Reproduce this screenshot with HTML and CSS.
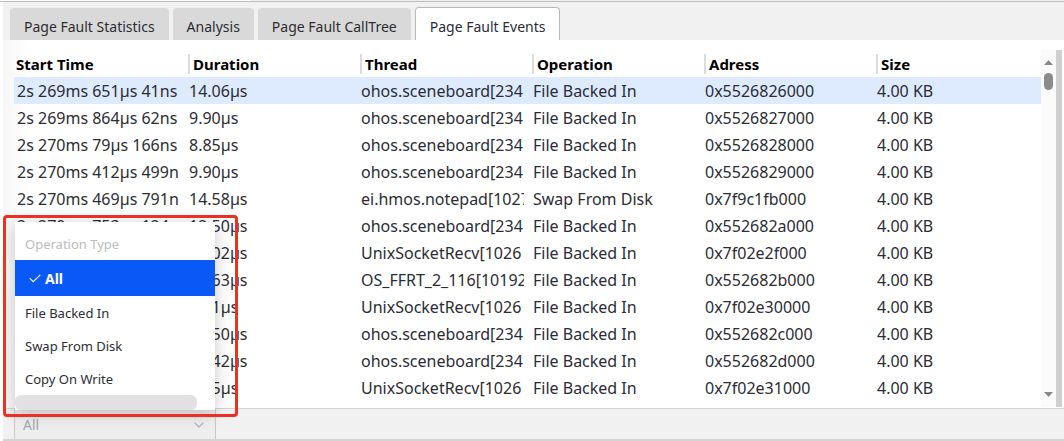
FILE: index.html
```html
<!DOCTYPE html>
<html lang="en">
<head>
<meta charset="utf-8">
<title>Page Fault Events</title>
<link rel="stylesheet" href="styles.css">
</head>
<body>
<main class="panel">
  <div class="ruler"></div>
  <div class="tabs" role="tablist">
    <button class="tab" role="tab" type="button">Page Fault Statistics</button>
    <button class="tab" role="tab" type="button">Analysis</button>
    <button class="tab" role="tab" type="button">Page Fault CallTree</button>
    <button class="tab active" role="tab" type="button" aria-selected="true">Page Fault Events</button>
  </div>
  <section class="content">
    <table class="events">
      <thead>
        <tr><th>Start Time</th><th>Duration</th><th>Thread</th><th>Operation</th><th>Adress</th><th>Size</th></tr>
      </thead>
      <tbody>
        <tr class="selected"><td>2s 269ms 651µs 41ns</td><td>14.06µs</td><td>ohos.sceneboard[234</td><td>File Backed In</td><td>0x5526826000</td><td>4.00 KB</td></tr>
        <tr><td>2s 269ms 864µs 62ns</td><td>9.90µs</td><td>ohos.sceneboard[234</td><td>File Backed In</td><td>0x5526827000</td><td>4.00 KB</td></tr>
        <tr><td>2s 270ms 79µs 166ns</td><td>8.85µs</td><td>ohos.sceneboard[234</td><td>File Backed In</td><td>0x5526828000</td><td>4.00 KB</td></tr>
        <tr><td>2s 270ms 412µs 499n</td><td>9.90µs</td><td>ohos.sceneboard[234</td><td>File Backed In</td><td>0x5526829000</td><td>4.00 KB</td></tr>
        <tr><td>2s 270ms 469µs 791n</td><td>14.58µs</td><td>ei.hmos.notepad[1027</td><td>Swap From Disk</td><td>0x7f9c1fb000</td><td>4.00 KB</td></tr>
        <tr><td>2s 270ms 753µs 124n</td><td>12.50µs</td><td>ohos.sceneboard[234</td><td>File Backed In</td><td>0x552682a000</td><td>4.00 KB</td></tr>
        <tr><td></td><td>13.02µs</td><td>UnixSocketRecv[1026</td><td>File Backed In</td><td>0x7f02e2f000</td><td>4.00 KB</td></tr>
        <tr><td></td><td>15.63µs</td><td>OS_FFRT_2_116[10192</td><td>File Backed In</td><td>0x552682b000</td><td>4.00 KB</td></tr>
        <tr><td></td><td>7.81µs</td><td>UnixSocketRecv[1026</td><td>File Backed In</td><td>0x7f02e30000</td><td>4.00 KB</td></tr>
        <tr><td></td><td>12.50µs</td><td>ohos.sceneboard[234</td><td>File Backed In</td><td>0x552682c000</td><td>4.00 KB</td></tr>
        <tr><td></td><td>10.42µs</td><td>ohos.sceneboard[234</td><td>File Backed In</td><td>0x552682d000</td><td>4.00 KB</td></tr>
        <tr><td></td><td>8.85µs</td><td>UnixSocketRecv[1026</td><td>File Backed In</td><td>0x7f02e31000</td><td>4.00 KB</td></tr>
      </tbody>
    </table>
    <div class="scrollbar" aria-hidden="true">
      <svg width="9" height="5" viewBox="0 0 9 5"><path d="M0 5 4.500 0 9 5z" fill="#888"/></svg>
      <span class="thumb"></span>
      <svg class="down" width="9" height="5" viewBox="0 0 9 5"><path d="M0 0h9L4.500 5z" fill="#888"/></svg>
    </div>
    <div class="gutter"></div>
  </section>
  <footer class="filters">
    <div class="filter">
      <select class="filter-select" aria-label="Operation Type"><option>All</option><option>File Backed In</option><option>Swap From Disk</option><option>Copy On Write</option></select>
      <svg class="chevron" width="10" height="6" viewBox="0 0 10 6"><path d="M.7.7 5 5 9.300.7" fill="none" stroke="#b4b8be" stroke-width="1.300"/></svg>
      <div class="popup">
        <div class="popup-title">Operation Type</div>
        <button class="option chosen" type="button"><svg width="12" height="9" viewBox="0 0 12 9"><path d="M.7 4.200 4.200 7.700 11.300.8" fill="none" stroke="#fff" stroke-width="1.100"/></svg>All</button>
        <button class="option" type="button">File Backed In</button>
        <button class="option" type="button">Swap From Disk</button>
        <button class="option" type="button">Copy On Write</button>
        <div class="popup-scroll"></div>
      </div>
      <div class="highlight"></div>
    </div>
  </footer>
</main>
</body>
</html>
```
FILE: styles.css
```css
* { box-sizing: border-box; }

body {
  margin: 0;
  background: #fff;
  color: #2b2d33;
  font-family: "Noto Sans", "Open Sans", sans-serif;
  font-size: 16px;
}

button, select { font: inherit; color: inherit; border: 0; margin: 0; }

.panel {
  display: flex;
  flex-direction: column;
  min-height: 100vh;
  overflow: hidden;
}

.ruler {
  height: 2px;
  border-bottom: 1px solid #bdbdbd;
  background: linear-gradient(90deg, #fff 250px, #eee 250px);
}

.tabs {
  display: flex;
  align-items: flex-end;
  gap: 4px;
  height: 38px;
  margin-left: 3px;
  padding-left: 7px;
  background: #f1f1f1;
}

.tab {
  height: 32px;
  padding: 6px 14px 0;
  border-radius: 4px 4px 0 0;
  background: #d9d9d9;
  font-size: 14px;
  line-height: 26px;
  white-space: nowrap;
}

.tab.active {
  height: 33px;
  border: 1px solid #b8b8b8;
  border-bottom: 0;
  background: #fff;
}

.content {
  display: flex;
  flex: 1;
  margin-left: 3px;
  padding: 10px 2px 1px 11px;
  background: linear-gradient(90deg, #f6f6f6, #fff 26px);
}

.events {
  flex: 1;
  align-self: flex-start;
  width: 100%;
  min-width: 0;
  border-collapse: separate;
  border-spacing: 0;
  table-layout: fixed;
}

.events th {
  width: 172px;
  height: 27px;
  padding: 0 0 0 5px;
  background: linear-gradient(#dcdcdc, #dcdcdc) 0 4px / 2px 20px no-repeat;
  color: #000;
  font-size: 15px;
  line-height: 20px;
  text-align: left;
}

.events th:first-child { width: 174px; padding-left: 2px; background: none; }
.events th:last-child { width: auto; }

.events td {
  height: 27px;
  padding: 0 0 0 1px;
  border-right: 8px solid transparent;
  line-height: 26px;
  overflow: hidden;
  white-space: nowrap;
}

.events td:first-child { padding-left: 3px; }
.selected { background: #deebff; }

.scrollbar {
  display: flex;
  flex: none;
  flex-direction: column;
  align-items: center;
  width: 15px;
  padding: 10px 0;
  background: #fbfbfb;
}

.thumb {
  width: 9px;
  height: 17px;
  margin-top: 8px;
  border-radius: 5px;
  background: #8b8b8b;
}

.down { margin-top: auto; }

.gutter { flex: none; width: 6px; background: #d0d0d0; }

.filters {
  height: 33px;
  margin-left: 3px;
  padding-left: 11px;
  border-top: 1px solid #d4d4d4;
  border-bottom: 2px solid #d4d4d4;
  background: #f1f1f1;
}

.filter {
  position: relative;
  width: 202px;
  height: 30px;
}

.filter-select {
  width: 100%;
  height: 100%;
  padding: 0 8px;
  border: solid #c8c8c8;
  border-width: 0 1px;
  border-radius: 0;
  appearance: none;
  background: #eee;
  color: #a3a7ae;
  font-size: 14px;
}

.chevron { position: absolute; right: 12px; top: 13px; }

.popup {
  position: absolute;
  left: 1px;
  bottom: 29px;
  width: 200px;
  background: #fff;
  box-shadow: 0 3px 16px rgba(0, 0, 0, .22);
  font-size: 13px;
}

.popup-title {
  height: 38px;
  padding: 6px 10px 0;
  color: #bdbdbd;
  line-height: 32px;
}

.option {
  display: flex;
  align-items: center;
  width: 100%;
  height: 33px;
  padding: 0 10px;
  background: #fff;
}

.option.chosen {
  gap: 4px;
  height: 36px;
  padding-left: 14px;
  background: #0a59f7;
  color: #fff;
  font-size: 14px;
  font-weight: 700;
}

.popup-scroll {
  width: 182px;
  height: 15px;
  border-radius: 6px;
  background: #e1e1e1;
}

.highlight {
  position: absolute;
  left: -11px;
  bottom: 22px;
  width: 235px;
  height: 202px;
  border: 3px solid #ee3024;
  border-radius: 4px;
  pointer-events: none;
}
```
